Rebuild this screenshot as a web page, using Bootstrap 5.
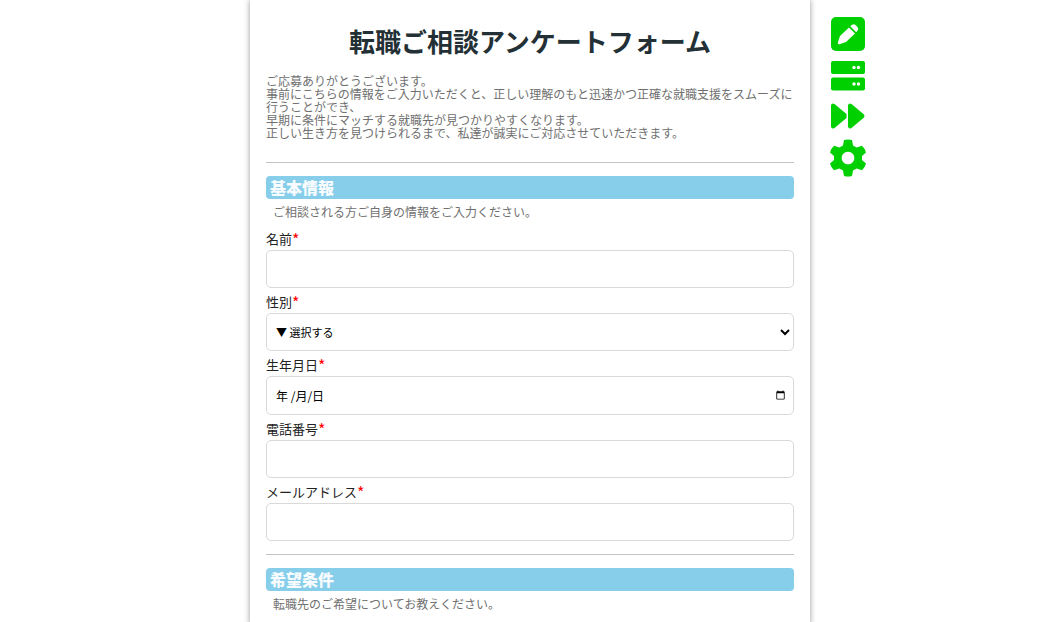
<!DOCTYPE html>
<html lang="ja">
<head>
<meta charset="utf-8">
<meta name="viewport" content="width=device-width, initial-scale=1">
<title>転職ご相談アンケートフォーム</title>
<link href="https://cdn.jsdelivr.net/npm/bootstrap@5.3.0/dist/css/bootstrap.min.css" rel="stylesheet">
<style>
  body { font-family: "Noto Sans CJK JP", sans-serif; font-size: 12px; background: #fff; color: #222; }
  .page-grid { display: grid; grid-template-columns: 1fr minmax(0, 560px) 1fr; min-height: 100vh; }
  .sheet { grid-column: 2; padding: 25px 16px 8px; margin-left: -1px; margin-right: 1px; box-shadow: 0 0 6px rgba(0, 0, 0, .4); }
  .sheet-title { font-size: 26px; line-height: 32px; font-weight: 700; color: #233035; margin-bottom: 17px; }
  .note { color: #707070; line-height: 13px; }
  .note-sub { color: #707070; line-height: 18px; margin: 4px 7px; }
  .rule { margin: 13px 0; border-top: 1px solid #c4c4c4; opacity: 1; }
  .intro { margin-bottom: 23px; }
  .band { background: #87ceeb; color: #f8fcff; border-radius: 4px; font-size: 16px; line-height: 23px; font-weight: 900; padding: 0 4px; margin: 0; }
  .field { padding-top: 3px; }
  .field label { display: block; font-size: 13px; line-height: 22px; }
  .req { color: #f00; font-size: 16px; line-height: 16px; vertical-align: -2px; }
  .box { display: block; width: 100%; height: 38px; border: 1px solid #d9d9d9; border-radius: 5px; background: #fff; color: #000; font-size: 11px; padding: 0 9px; }
  select.box { padding: 0 6px 0 5px; }
  .date-wrap .box { height: 39px; padding-right: 5px; }
  .date-wrap input:not(:focus)::-webkit-datetime-edit { opacity: 0; }
  .date-wrap input:focus + .date-hint { display: none; }
  .date-hint { left: 10px; top: 0; line-height: 39px; font-size: 12px; color: #000; pointer-events: none; }
  .tools { padding: 17px 0 0 18px; }
  .tools a { color: #00cf00; width: 38px; display: flex; justify-content: center; }
  .tools svg { display: block; fill: currentColor; }
</style>
</head>
<body>
<div class="page-grid">
  <main class="sheet">
    <h1 class="sheet-title text-center">転職ご相談アンケートフォーム</h1>
    <p class="note intro">ご応募ありがとうございます。<br>事前にこちらの情報をご入力いただくと、正しい理解のもと迅速かつ正確な就職支援をスムーズに行うことができ、<br>早期に条件にマッチする就職先が見つかりやすくなります。<br>正しい生き方を見つけられるまで、私達が誠実にご対応させていただきます。</p>
    <hr class="rule">
    <form>
      <h2 class="band">基本情報</h2>
      <p class="note-sub">ご相談される方ご自身の情報をご入力ください。</p>
      <div class="field">
        <label for="name">名前<span class="req">*</span></label>
        <input class="box" id="name" type="text" required>
      </div>
      <div class="field">
        <label for="gender">性別<span class="req">*</span></label>
        <select class="box" id="gender" required><option value="">▼ 選択する</option><option>男性</option><option>女性</option></select>
      </div>
      <div class="field">
        <label for="birth">生年月日<span class="req">*</span></label>
        <div class="date-wrap position-relative">
          <input class="box" id="birth" type="date" required>
          <span class="date-hint position-absolute" aria-hidden="true">年 /月/日</span>
        </div>
      </div>
      <div class="field">
        <label for="tel">電話番号<span class="req">*</span></label>
        <input class="box" id="tel" type="tel" required>
      </div>
      <div class="field">
        <label for="mail">メールアドレス<span class="req">*</span></label>
        <input class="box" id="mail" type="email" required>
      </div>
      <hr class="rule">
      <h2 class="band">希望条件</h2>
      <p class="note-sub">転職先のご希望についてお教えください。</p>
    </form>
  </main>
  <nav class="tools d-flex flex-column" aria-label="ツール">
    <a href="#" aria-label="編集"><svg width="34" height="34" viewBox="0 0 34 34"><rect width="34" height="34" rx="5"/><path fill="#fff" d="M7 27Q6.500 26.500 7 25L9 19L18 10.500L24 16.500L15 25L8.500 27.200Q7.500 27.500 7 27zM19.300 9.300L21 7.800Q22.800 6.500 24.500 8L26.500 10Q28 11.800 26.600 13.600L25.200 15.300z"/></svg></a>
    <a class="mt-2" href="#" aria-label="サーバー"><svg width="34" height="34" viewBox="0 0 34 34"><rect y="2" width="34" height="13" rx="2"/><rect y="18.500" width="34" height="13" rx="2"/><g fill="#fff"><circle cx="23" cy="8.500" r="1.700"/><circle cx="27.500" cy="8.500" r="1.700"/><circle cx="23" cy="25" r="1.700"/><circle cx="27.500" cy="25" r="1.700"/></g></svg></a>
    <a class="mt-2" href="#" aria-label="早送り"><svg width="34" height="30" viewBox="0 0 34 30"><path d="M0 4.500Q.5 1.500 3.500 3L15.500 13V17L3.500 27Q.5 28.500 0 25.500zM17 4.500Q17.500 1.500 20.500 3L33 13.500Q34 15 33 16.500L20.500 27Q17.500 28.500 17 25.500z"/></svg></a>
    <a class="mt-2" href="#" aria-label="設定"><svg width="38" height="38" viewBox="0 0 38 38"><path fill-rule="evenodd" d="M15 1Q19 0 23 1L24 6.500L27.500 8.500L33 6.700Q36 9.500 37 13.500L33 17V21L37 24.500Q36 28.500 33 31.300L27.500 29.500L24 31.500L23 37Q19 38 15 37L14 31.500L10.500 29.500L5 31.300Q2 28.500 1 24.500L5 21V17L1 13.500Q2 9.500 5 6.700L10.500 8.500L14 6.500zM19 12.700a6.300 6.300 0 1 0 .01 0z"/></svg></a>
  </nav>
</div>
<script src="https://cdn.jsdelivr.net/npm/bootstrap@5.3.0/dist/js/bootstrap.bundle.min.js"></script>
</body>
</html>
